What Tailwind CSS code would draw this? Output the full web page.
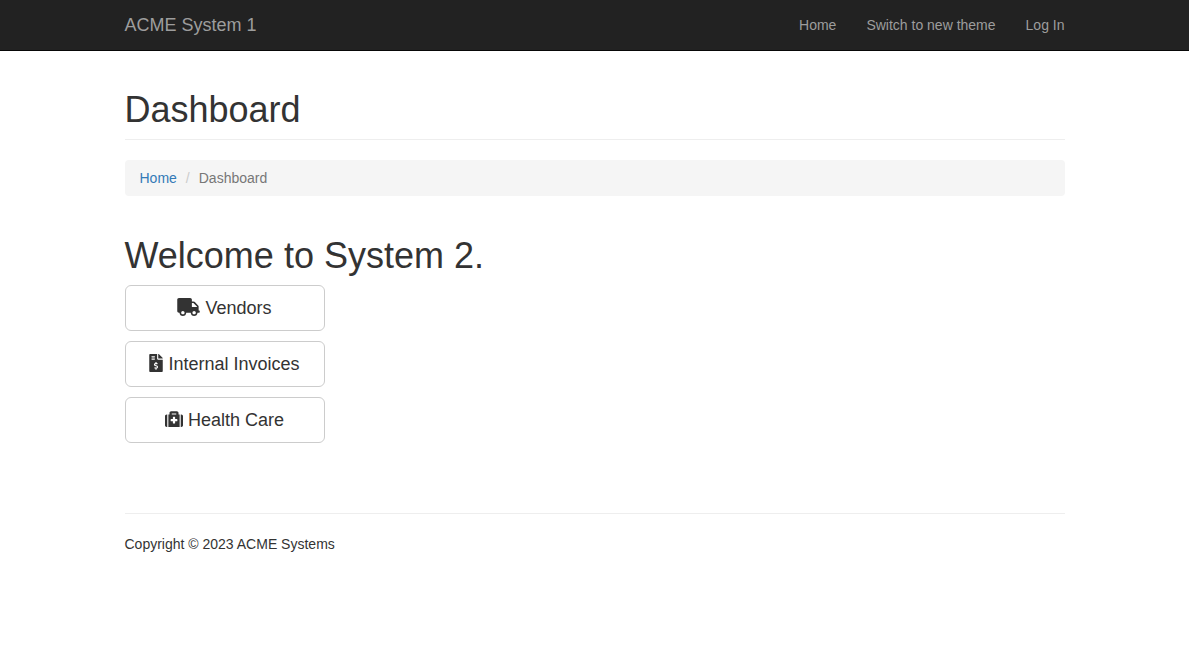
<!DOCTYPE html>
<html lang="en">
<head>
<meta charset="utf-8">
<meta name="viewport" content="width=device-width, initial-scale=1">
<title>Dashboard</title>
<script src="https://cdn.jsdelivr.net/npm/@tailwindcss/browser@4"></script>
</head>
<body class="bg-white font-['Liberation_Sans',Arial,sans-serif] text-sm leading-5 text-[#333]">
<header class="border-b border-[#080808] bg-[#222]">
  <nav class="mx-auto flex max-w-[970px] flex-wrap items-center justify-between px-[15px] text-[#9d9d9d]" aria-label="Main">
    <a href="#" class="py-[15px] text-lg leading-5">ACME System 1</a>
    <ul class="flex gap-[30px]">
      <li><a href="#" class="block py-[15px]">Home</a></li>
      <li><a href="#" class="block py-[15px]">Switch to new theme</a></li>
      <li><a href="#" class="block py-[15px]">Log In</a></li>
    </ul>
  </nav>
</header>
<div class="mx-auto max-w-[970px] px-[15px]">
  <main>
    <h1 class="mt-[39px] border-b border-[#eee] pb-[9px] text-4xl leading-10">Dashboard</h1>
    <nav class="mt-5 rounded bg-[#f5f5f5] px-[15px] py-2" aria-label="Breadcrumb">
      <ol class="flex">
        <li><a href="#" class="text-[#337ab7]">Home</a></li>
        <li class="px-[9px] text-[#ccc]" aria-hidden="true">/</li>
        <li class="text-[#777]" aria-current="page">Dashboard</li>
      </ol>
    </nav>
    <h1 class="mt-10 text-4xl leading-10">Welcome to System 2.</h1>
    <div class="mt-[9px] flex flex-col items-start gap-[10px] text-lg leading-6">
      <a href="#" class="flex w-[200px] items-center justify-center gap-[5px] rounded-md border border-[#ccc] py-[10px]">
        <svg class="mb-[2px] h-[18px] w-[23px]" viewBox="0 0 640 512" fill="currentColor" aria-hidden="true"><path d="M624 352h-16V243.9c0-12.7-5.1-24.9-14.1-33.9L494 110.1c-9-9-21.2-14.1-33.9-14.1H416V48c0-26.5-21.5-48-48-48H48C21.5 0 0 21.5 0 48v320c0 26.5 21.5 48 48 48h16c0 53 43 96 96 96s96-43 96-96h128c0 53 43 96 96 96s96-43 96-96h48c8.8 0 16-7.2 16-16v-32c0-8.8-7.2-16-16-16zM160 464c-26.5 0-48-21.5-48-48s21.5-48 48-48 48 21.5 48 48-21.5 48-48 48zm320 0c-26.5 0-48-21.5-48-48s21.5-48 48-48 48 21.5 48 48-21.5 48-48 48zm80-208H416V144h44.1l99.9 99.9V256z"/></svg>
        <span>Vendors</span>
      </a>
      <a href="#" class="flex w-[200px] items-center justify-center gap-[5px] rounded-md border border-[#ccc] py-[10px]">
        <svg class="mb-[2px] h-[18px] w-[14px]" viewBox="0 0 384 512" fill="currentColor" aria-hidden="true"><path d="M377 105L279.1 7c-4.5-4.5-10.6-7-17-7H256v128h128v-6.1c0-6.3-2.5-12.4-7-16.9zm-153 31V0H24C10.7 0 0 10.7 0 24v464c0 13.3 10.7 24 24 24h336c13.3 0 24-10.7 24-24V160H248c-13.2 0-24-10.8-24-24zM64 72c0-4.42 3.58-8 8-8h80c4.42 0 8 3.58 8 8v16c0 4.42-3.58 8-8 8H72c-4.42 0-8-3.58-8-8V72zm0 80v-16c0-4.42 3.58-8 8-8h80c4.42 0 8 3.58 8 8v16c0 4.42-3.58 8-8 8H72c-4.42 0-8-3.58-8-8zm144 263.88V440c0 4.42-3.58 8-8 8h-16c-4.42 0-8-3.58-8-8v-24.29c-11.29-.58-22.27-4.52-31.37-11.35-3.9-2.93-4.1-8.77-.57-12.14l11.75-11.21c2.77-2.64 6.89-2.76 10.13-.73 3.87 2.42 8.26 3.72 12.82 3.72h28.11c6.5 0 11.8-5.92 11.8-13.19 0-5.95-3.61-11.19-8.77-12.73l-45-13.5c-18.59-5.58-31.58-23.42-31.58-43.39 0-24.52 19.05-44.44 42.67-45.07V232c0-4.42 3.58-8 8-8h16c4.42 0 8 3.58 8 8v24.29c11.29.58 22.27 4.51 31.37 11.35 3.9 2.93 4.1 8.77.57 12.14l-11.75 11.21c-2.77 2.64-6.89 2.76-10.13.73-3.87-2.43-8.26-3.72-12.82-3.72h-28.11c-6.5 0-11.8 5.92-11.8 13.19 0 5.95 3.61 11.19 8.77 12.73l45 13.5c18.59 5.58 31.58 23.42 31.58 43.39 0 24.53-19.05 44.44-42.67 45.07z"/></svg>
        <span>Internal Invoices</span>
      </a>
      <a href="#" class="flex w-[200px] items-center justify-center gap-[5px] rounded-md border border-[#ccc] py-[10px]">
        <svg class="mb-[2px] h-[18px] w-[18px]" viewBox="0 0 512 512" fill="currentColor" aria-hidden="true"><path d="M96 480h320V128h-32V80c0-26.51-21.49-48-48-48H176c-26.51 0-48 21.49-48 48v48H96v352zm96-384h128v32H192V96zm320 80v256c0 26.51-21.49 48-48 48h-16V128h16c26.51 0 48 21.49 48 48zM64 480H48c-26.51 0-48-21.49-48-48V176c0-26.51 21.49-48 48-48h16v352zm288-208v32c0 8.837-7.163 16-16 16h-48v48c0 8.837-7.163 16-16 16h-32c-8.837 0-16-7.163-16-16v-48h-48c-8.837 0-16-7.163-16-16v-32c0-8.837 7.163-16 16-16h48v-48c0-8.837 7.163-16 16-16h32c8.837 0 16 7.163 16 16v48h48c8.837 0 16 7.163 16 16z"/></svg>
        <span>Health Care</span>
      </a>
    </div>
  </main>
  <footer class="mt-[70px] border-t border-[#eee] pt-5">
    <p>Copyright © 2023 ACME Systems</p>
  </footer>
</div>
</body>
</html>
